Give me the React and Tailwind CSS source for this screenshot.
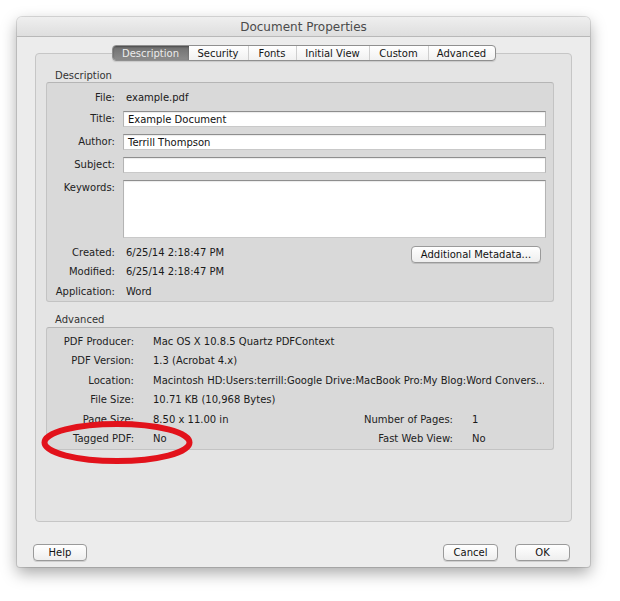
const tabs = [
  { name: "Description", w: "w-[76px]", active: true },
  { name: "Security", w: "w-[59px]" },
  { name: "Fonts", w: "w-[48px]" },
  { name: "Initial View", w: "w-[73px]" },
  { name: "Custom", w: "w-[59px]" },
  { name: "Advanced", w: "w-[67px]" },
];

function Input({ h = "h-[16px]", value = "" }) {
  return (
    <div
      className={`${h} flex-1 mr-[7px] bg-white border border-[#b4b4b4] border-t-[#8e8e8e] border-b-[#c9c9c9] shadow-[inset_0_1px_1px_rgba(0,0,0,0.08)] pl-[4px] text-[10px] leading-[15px] text-[#111]`}
    >
      {value}
    </div>
  );
}

function Btn({ children, w }) {
  return (
    <div
      className={`${w} h-[17px] flex items-center justify-center rounded-[4px] border border-[#9a9a9a] bg-gradient-to-b from-[#ffffff] to-[#eeeeee] shadow-[0_1px_0_rgba(0,0,0,0.12)] text-[10px] text-[#111]`}
    >
      {children}
    </div>
  );
}

function DescRow({ label, children, className = "" }) {
  return (
    <div className={`flex items-center ${className}`}>
      <div className="w-[68px] text-right text-[#222]">{label}</div>
      <div className="ml-[8px] flex-1 flex">{children}</div>
    </div>
  );
}

function AdvRow({ label, value, label2, value2 }) {
  return (
    <div className="h-[19.5px] flex items-center whitespace-nowrap">
      <div className="w-[87px] text-right text-[#222]">{label}</div>
      {label2 ? (
        <>
          <div className="ml-[19px] w-[200px] text-[#1a1a1a]">{value}</div>
          <div className="w-[100px] text-right text-[#222]">{label2}</div>
          <div className="ml-[19px] text-[#1a1a1a]">{value2}</div>
        </>
      ) : (
        <div className="ml-[19px] flex-1 overflow-hidden text-[#1a1a1a]">{value}</div>
      )}
    </div>
  );
}

export default function App() {
  return (
    <div className="w-[620px] min-h-[601px] bg-white pt-[17px] pl-[17px] font-['DejaVu_Sans',sans-serif]">
      <div className="relative w-[573px] h-[550px] bg-[#ececec] rounded-t-[5px] rounded-b-[3px] shadow-[0_6px_16px_rgba(0,0,0,0.35),0_0_0_1px_rgba(0,0,0,0.12)] flex flex-col">
        {/* title bar */}
        <div className="h-[20px] shrink-0 flex items-center justify-center pt-[1px] rounded-t-[5px] bg-gradient-to-b from-[#efefef] to-[#dedede] border-b border-[#b8b8b8] text-[12px] text-[#4b4b4b]">
          Document Properties
        </div>

        {/* tabs */}
        <div className="mt-[8px] h-[16px] flex justify-center relative z-10">
          <div className="flex h-[16px] rounded-[4px] border border-[#8f8f8f] bg-gradient-to-b from-[#ffffff] to-[#f1f1f1] shadow-[0_1px_1px_rgba(0,0,0,0.12)] overflow-hidden">
            {tabs.map((t, i) => (
              <div
                key={t.name}
                className={`${t.w} h-full flex items-center justify-center text-[10px] ${
                  t.active
                    ? "bg-gradient-to-b from-[#6f6f6f] to-[#8c8c8c] text-[#ececec] shadow-[inset_0_1px_2px_rgba(0,0,0,0.35)]"
                    : "text-[#151515]"
                } ${i > 1 ? "border-l border-[#cfcfcf]" : ""}`}
              >
                {t.name}
              </div>
            ))}
          </div>
        </div>

        {/* group box */}
        <div className="-mt-[8px] ml-[18px] w-[537px] h-[469px] shrink-0 rounded-[4px] border border-[#c6c6c6] bg-[#e4e4e4] pt-[14px] text-[10px]">
          <div className="pl-[19px] h-[14px] leading-[16px] text-[#333]">Description</div>
          <div className="ml-[10px] w-[508px] h-[220px] rounded-[3px] border border-[#c3c3c3] border-t-[#b5b5b5] bg-[#d9d9d9] pt-[7px] flex flex-col leading-[14px]">
            <DescRow label="File:" className="h-[16px]">
              <span className="pl-[3px] text-[#1a1a1a]">example.pdf</span>
            </DescRow>
            <DescRow label="Title:" className="mt-[5px]">
              <Input value="Example Document" />
            </DescRow>
            <DescRow label="Author:" className="mt-[7px]">
              <Input value="Terrill Thompson" />
            </DescRow>
            <DescRow label="Subject:" className="mt-[7px]">
              <Input />
            </DescRow>
            <div className="mt-[7px] flex items-start">
              <div className="w-[68px] text-right text-[#222] pt-[1px]">Keywords:</div>
              <div className="ml-[8px] flex-1 flex">
                <Input h="h-[58px]" />
              </div>
            </div>
            <div className="mt-[7px] flex items-start h-[17px]">
              <div className="w-[68px] text-right text-[#222] h-[14px] pt-[1px]">Created:</div>
              <div className="ml-[8px] pl-[3px] flex-1 text-[#1a1a1a] h-[14px] pt-[1px]">6/25/14 2:18:47 PM</div>
              <div className="mt-[1px] mr-[12px]">
                <Btn w="w-[130px]">Additional Metadata...</Btn>
              </div>
            </div>
            <div className="mt-[3px] flex h-[14px]">
              <div className="w-[68px] text-right text-[#222]">Modified:</div>
              <div className="ml-[8px] pl-[3px] text-[#1a1a1a]">6/25/14 2:18:47 PM</div>
            </div>
            <div className="mt-[6px] flex h-[14px]">
              <div className="w-[68px] text-right text-[#222]">Application:</div>
              <div className="ml-[8px] pl-[3px] text-[#1a1a1a]">Word</div>
            </div>
          </div>

          <div className="mt-[10px] pl-[19px] h-[14px] leading-[16px] text-[#333]">Advanced</div>
          <div className="mt-[1px] ml-[10px] w-[508px] h-[123px] rounded-[3px] border border-[#c3c3c3] border-t-[#b5b5b5] bg-[#d9d9d9] pt-[4px] pr-[9px] flex flex-col leading-[14px]">
            <AdvRow label="PDF Producer:" value="Mac OS X 10.8.5 Quartz PDFContext" />
            <AdvRow label="PDF Version:" value="1.3 (Acrobat 4.x)" />
            <AdvRow
              label="Location:"
              value="Macintosh HD:Users:terrill:Google Drive:MacBook Pro:My Blog:Word Convers..."
            />
            <AdvRow label="File Size:" value="10.71 KB (10,968 Bytes)" />
            <AdvRow label="Page Size:" value="8.50 x 11.00 in" label2="Number of Pages:" value2="1" />
            <AdvRow label="Tagged PDF:" value="No" label2="Fast Web View:" value2="No" />
          </div>
        </div>

        {/* bottom buttons */}
        <div className="mt-[22px] flex items-center pl-[16px] pr-[20px]">
          <Btn w="w-[54px]">Help</Btn>
          <div className="flex-1" />
          <Btn w="w-[55px]">Cancel</Btn>
          <div className="ml-[17px]">
            <Btn w="w-[55px]">OK</Btn>
          </div>
        </div>

        {/* red annotation ellipse */}
        <svg
          className="absolute left-[24px] top-[404px] pointer-events-none"
          width="152"
          height="43"
          viewBox="0 0 152 43"
        >
          <ellipse cx="76" cy="21.5" rx="72.5" ry="18.5" fill="none" stroke="#e2121b" strokeWidth="6" />
        </svg>
      </div>
    </div>
  );
}
